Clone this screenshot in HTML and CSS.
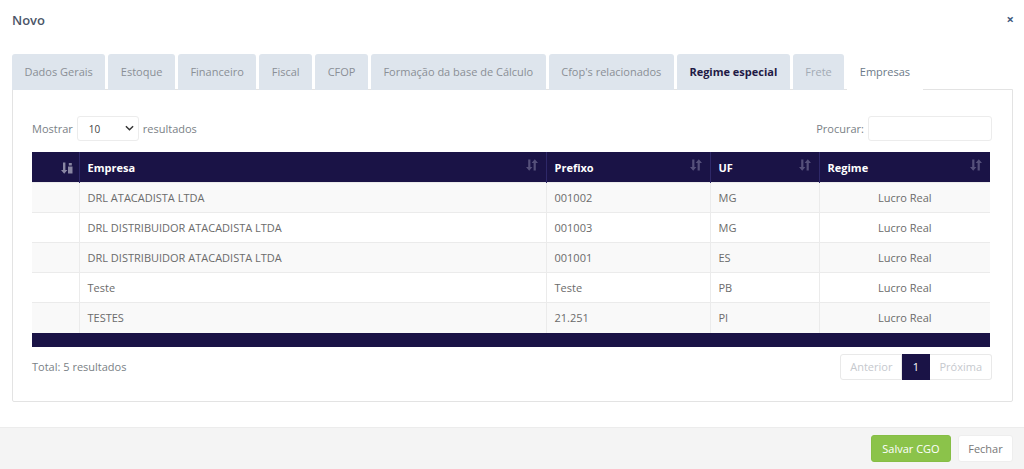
FILE: index.html
```html
<!DOCTYPE html>
<html lang="pt-BR">
<head>
<meta charset="utf-8">
<title>Novo</title>
<link rel="stylesheet" href="styles.css">
</head>
<body>
<div class="modal">
  <div class="modal-header">
    <h4 class="modal-title">Novo</h4>
    <span class="close">×</span>
  </div>
  <div class="modal-body">
    <ul class="tabs">
      <li class="tab">Dados Gerais</li>
      <li class="tab">Estoque</li>
      <li class="tab">Financeiro</li>
      <li class="tab">Fiscal</li>
      <li class="tab">CFOP</li>
      <li class="tab">Formação da base de Cálculo</li>
      <li class="tab">Cfop's relacionados</li>
      <li class="tab tab-hover">Regime especial</li>
      <li class="tab tab-light">Frete</li>
      <li class="tab tab-active">Empresas</li>
    </ul>
    <div class="panel">
      <div class="controls">
        <div class="length">
          <span>Mostrar</span>
          <span class="select"><span>10</span>
            <svg class="chev" viewBox="0 0 10 6" width="9" height="6"><path d="M1 1 L5 5 L9 1" fill="none" stroke="#333" stroke-width="1.6"/></svg>
          </span>
          <span>resultados</span>
        </div>
        <div class="search">
          <span>Procurar:</span>
          <span class="input"></span>
        </div>
      </div>
      <table class="grid">
        <thead>
          <tr>
            <th class="c0"><svg class="sort0" viewBox="0 0 12 12" width="12" height="12"><path d="M2 0.5h2.4v7.5h2l-3.2 3.8-3.2-3.8h2z" fill="#8a87a3"/><path d="M7 4.5h4.5v7H7z" fill="#8a87a3"/><path d="M7.8 1h3v2.5h-3z" fill="#8a87a3"/></svg></th>
            <th class="c1"><span>Empresa</span><svg class="sort" viewBox="0 0 12 12" width="12" height="12"><path d="M2.2 0.5h2.2v7.5h2l-3.2 3.8-3.2-3.8h2.2z" fill="#55507a"/><path d="M9.8 11.5H7.6V4H5.6l3.2-3.8L12 4H9.8z" fill="#55507a"/></svg></th>
            <th class="c2"><span>Prefixo</span><svg class="sort" viewBox="0 0 12 12" width="12" height="12"><path d="M2.2 0.5h2.2v7.5h2l-3.2 3.8-3.2-3.8h2.2z" fill="#55507a"/><path d="M9.8 11.5H7.6V4H5.6l3.2-3.8L12 4H9.8z" fill="#55507a"/></svg></th>
            <th class="c3"><span>UF</span><svg class="sort" viewBox="0 0 12 12" width="12" height="12"><path d="M2.2 0.5h2.2v7.5h2l-3.2 3.8-3.2-3.8h2.2z" fill="#55507a"/><path d="M9.8 11.5H7.6V4H5.6l3.2-3.8L12 4H9.8z" fill="#55507a"/></svg></th>
            <th class="c4"><span>Regime</span><svg class="sort" viewBox="0 0 12 12" width="12" height="12"><path d="M2.2 0.5h2.2v7.5h2l-3.2 3.8-3.2-3.8h2.2z" fill="#55507a"/><path d="M9.8 11.5H7.6V4H5.6l3.2-3.8L12 4H9.8z" fill="#55507a"/></svg></th>
          </tr>
        </thead>
        <tbody>
          <tr><td></td><td>DRL ATACADISTA LTDA</td><td>001002</td><td>MG</td><td class="center">Lucro Real</td></tr>
          <tr><td></td><td>DRL DISTRIBUIDOR ATACADISTA LTDA</td><td>001003</td><td>MG</td><td class="center">Lucro Real</td></tr>
          <tr><td></td><td>DRL DISTRIBUIDOR ATACADISTA LTDA</td><td>001001</td><td>ES</td><td class="center">Lucro Real</td></tr>
          <tr><td></td><td>Teste</td><td>Teste</td><td>PB</td><td class="center">Lucro Real</td></tr>
          <tr><td></td><td>TESTES</td><td>21.251</td><td>PI</td><td class="center">Lucro Real</td></tr>
        </tbody>
        <tfoot>
          <tr><td colspan="5"></td></tr>
        </tfoot>
      </table>
      <div class="bottom">
        <span class="total">Total: 5 resultados</span>
        <div class="pager">
          <span class="pg pg-disabled">Anterior</span>
          <span class="pg pg-active">1</span>
          <span class="pg pg-disabled">Próxima</span>
        </div>
      </div>
    </div>
  </div>
  <div class="modal-footer">
    <button class="btn btn-save">Salvar CGO</button>
    <button class="btn btn-close">Fechar</button>
  </div>
</div>
</body>
</html>
```

FILE: styles.css
```css
* { box-sizing: border-box; }
html, body { margin: 0; padding: 0; background: #fff; }
body {
  font-family: "Open Sans", "Noto Sans", sans-serif;
  font-size: 11px;
  color: #6b6b6b;
  width: 1024px;
  height: 469px;
  overflow: hidden;
}
.modal { display: flex; flex-direction: column; height: 469px; }
.modal-header {
  height: 40px;
  display: flex;
  align-items: center;
  justify-content: space-between;
  padding: 0 10px 0 12px;
}
.modal-title {
  margin: 0;
  font-size: 13px;
  font-weight: 600;
  color: #4b5568;
}
.close {
  font-size: 13px;
  font-weight: 700;
  color: #3e5a7e;
  line-height: 1;
}
.modal-body { padding: 14px 11px 0 12px; flex: 1; }
.tabs {
  list-style: none;
  margin: 0;
  padding: 0;
  display: flex;
  gap: 3px;
  position: relative;
  z-index: 1;
  margin-bottom: -1px;
}
.tab {
  height: 36px;
  line-height: 35px;
  padding: 0 12.5px;
  background: #dee5ed;
  color: #8a8f96;
  border-radius: 3px 3px 0 0;
  white-space: nowrap;
}
.tab-hover { color: #1f1a45; font-weight: 700; }
.tab-light { color: #a2aab4; }
.tab-active { background: #fff; color: #6c7a89; }
.panel {
  border: 1px solid #e3e3e3;
  border-radius: 0 0 2px 2px;
  padding: 26px 20px 20px 19px;
  height: 313px;
}
.controls {
  display: flex;
  justify-content: space-between;
  align-items: center;
  height: 25px;
  margin-bottom: 11px;
}
.length, .search { display: flex; align-items: center; gap: 4px; color: #7a7f86; }
.select {
  width: 62px;
  height: 25px;
  border: 1px solid #ececec;
  border-radius: 3px;
  display: flex;
  align-items: center;
  justify-content: space-between;
  padding: 2px 4px 0 11px;
  font-size: 10px;
  color: #444;
}
.chev { margin-top: -2px; }
.input {
  width: 124px;
  height: 25px;
  border: 1px solid #ececec;
  border-radius: 3px;
}
.grid {
  width: 958px;
  border-collapse: collapse;
  table-layout: fixed;
}
.grid th {
  background: #1a1346;
  color: #fff;
  font-weight: 700;
  text-align: left;
  height: 31px;
  padding: 0 8px;
  border-left: 1px solid #2e2868;
}
.grid th:first-child { border-left: none; }
.grid th span { vertical-align: middle; }
.grid th .sort { float: right; margin-top: 1px; }
.grid .c0 { width: 47px; text-align: right; padding-right: 6px; }
.grid .c1 { width: 467px; }
.grid .c2 { width: 164px; }
.grid .c3 { width: 109px; }
.grid .c4 { width: 171px; }
.sort0 { vertical-align: middle; }
.grid td {
  height: 30px;
  padding: 0 8px;
  color: #6b6b6b;
  border-top: 1px solid #ebebeb;
  border-left: 1px solid #ebebeb;
  white-space: nowrap;
}
.grid td:first-child { border-left: none; }
.grid tbody tr:nth-child(odd) td { background: #f9f9f9; }
.grid tbody tr:nth-child(even) td { background: #fff; }
.grid td.center { text-align: center; }
.grid tfoot td {
  height: 14px;
  background: #1a1346;
  border: none;
  padding: 0;
}
.bottom {
  display: flex;
  justify-content: space-between;
  align-items: center;
  margin-top: 7px;
}
.total { color: #7a7f86; }
.pager { display: flex; }
.pg {
  height: 26px;
  line-height: 24px;
  border: 1px solid #e9e9e9;
  padding: 0 9px;
  color: #c6c9ce;
}
.pg + .pg { border-left: none; }
.pg:first-child { border-radius: 3px 0 0 3px; }
.pg:last-child { border-radius: 0 3px 3px 0; }
.pg-active {
  background: #1a1346;
  border-color: #1a1346;
  color: #fff;
  width: 28px;
  text-align: center;
  padding: 0;
}
.modal-footer {
  height: 43px;
  margin-top: 25px;
  background: #f4f4f4;
  border-top: 1px solid #ececec;
  display: flex;
  justify-content: flex-end;
  align-items: center;
  gap: 7px;
  padding: 0 11px 0 0;
}
.btn {
  font-family: inherit;
  font-size: 11px;
  height: 27px;
  border-radius: 3px;
  border: 1px solid transparent;
  padding: 0;
  white-space: nowrap;
  cursor: pointer;
}
.btn-save { background: #8bc34a; color: #fff; width: 80px; border-color: #86be45; }
.btn-close { background: #fff; color: #777; width: 55px; border-color: #eee; }
```
